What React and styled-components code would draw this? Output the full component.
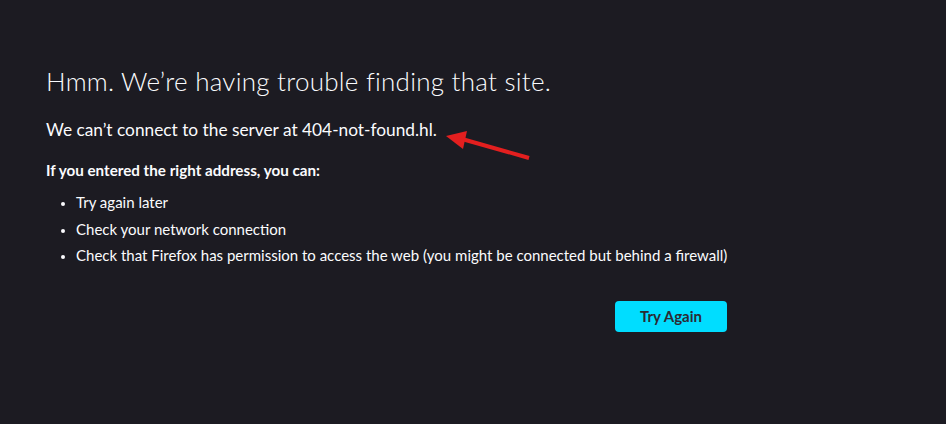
import React from "react";
import styled, { createGlobalStyle } from "styled-components";

const GlobalStyle = createGlobalStyle`
  html, body {
    margin: 0;
    padding: 0;
    background: #1c1b22;
  }
  body {
    font-family: "Lato", "Open Sans", sans-serif;
    color: #fbfbfe;
  }
`;

const Page = styled.div`
  position: relative;
  width: 946px;
  height: 424px;
  background: #1c1b22;
  box-sizing: border-box;
  padding: 62px 0 0 46px;
  overflow: hidden;
`;

const Container = styled.div`
  width: 681px;
`;

const Title = styled.h1`
  margin: 0;
  font-size: 26px;
  font-weight: 300;
  line-height: 38px;
  letter-spacing: 0.25px;
`;

const Lead = styled.p`
  margin: 18px 0 0;
  font-size: 17.3px;
  line-height: 24px;
`;

const Subhead = styled.p`
  margin: 17px 0 0;
  font-size: 15.2px;
  font-weight: 700;
  line-height: 22px;
`;

const List = styled.ul`
  margin: 8px 0 0;
  padding-left: 30px;
  font-size: 15px;
  line-height: 26.5px;

  li {
    white-space: nowrap;
  }

  li::marker {
    font-size: 13px;
  }
`;

const Actions = styled.div`
  display: flex;
  justify-content: flex-end;
  margin-top: 32px;
`;

const Button = styled.button`
  width: 112px;
  height: 31px;
  border: none;
  border-radius: 4px;
  background: #00ddff;
  color: #2b2a33;
  font-family: "Lato", "Open Sans", sans-serif;
  font-size: 15px;
  font-weight: 700;
  cursor: pointer;
`;

const Arrow = styled.svg`
  position: absolute;
  left: 440px;
  top: 125px;
`;

const App = () => {
  return (
    <Page>
      <GlobalStyle />
      <Container>
        <Title>Hmm. We’re having trouble finding that site.</Title>
        <Lead>We can’t connect to the server at 404-not-found.hl.</Lead>
        <Subhead>If you entered the right address, you can:</Subhead>
        <List>
          <li>Try again later</li>
          <li>Check your network connection</li>
          <li>
            Check that Firefox has permission to access the web (you might be
            connected but behind a firewall)
          </li>
        </List>
        <Actions>
          <Button>Try Again</Button>
        </Actions>
      </Container>
      <Arrow width="100" height="40" viewBox="0 0 100 40">
        <line x1="22" y1="14" x2="89" y2="33" stroke="#e31f1f" strokeWidth="4" />
        <polygon points="6,11 27,6 23,24" fill="#e31f1f" />
      </Arrow>
    </Page>
  );
};

export default App;
